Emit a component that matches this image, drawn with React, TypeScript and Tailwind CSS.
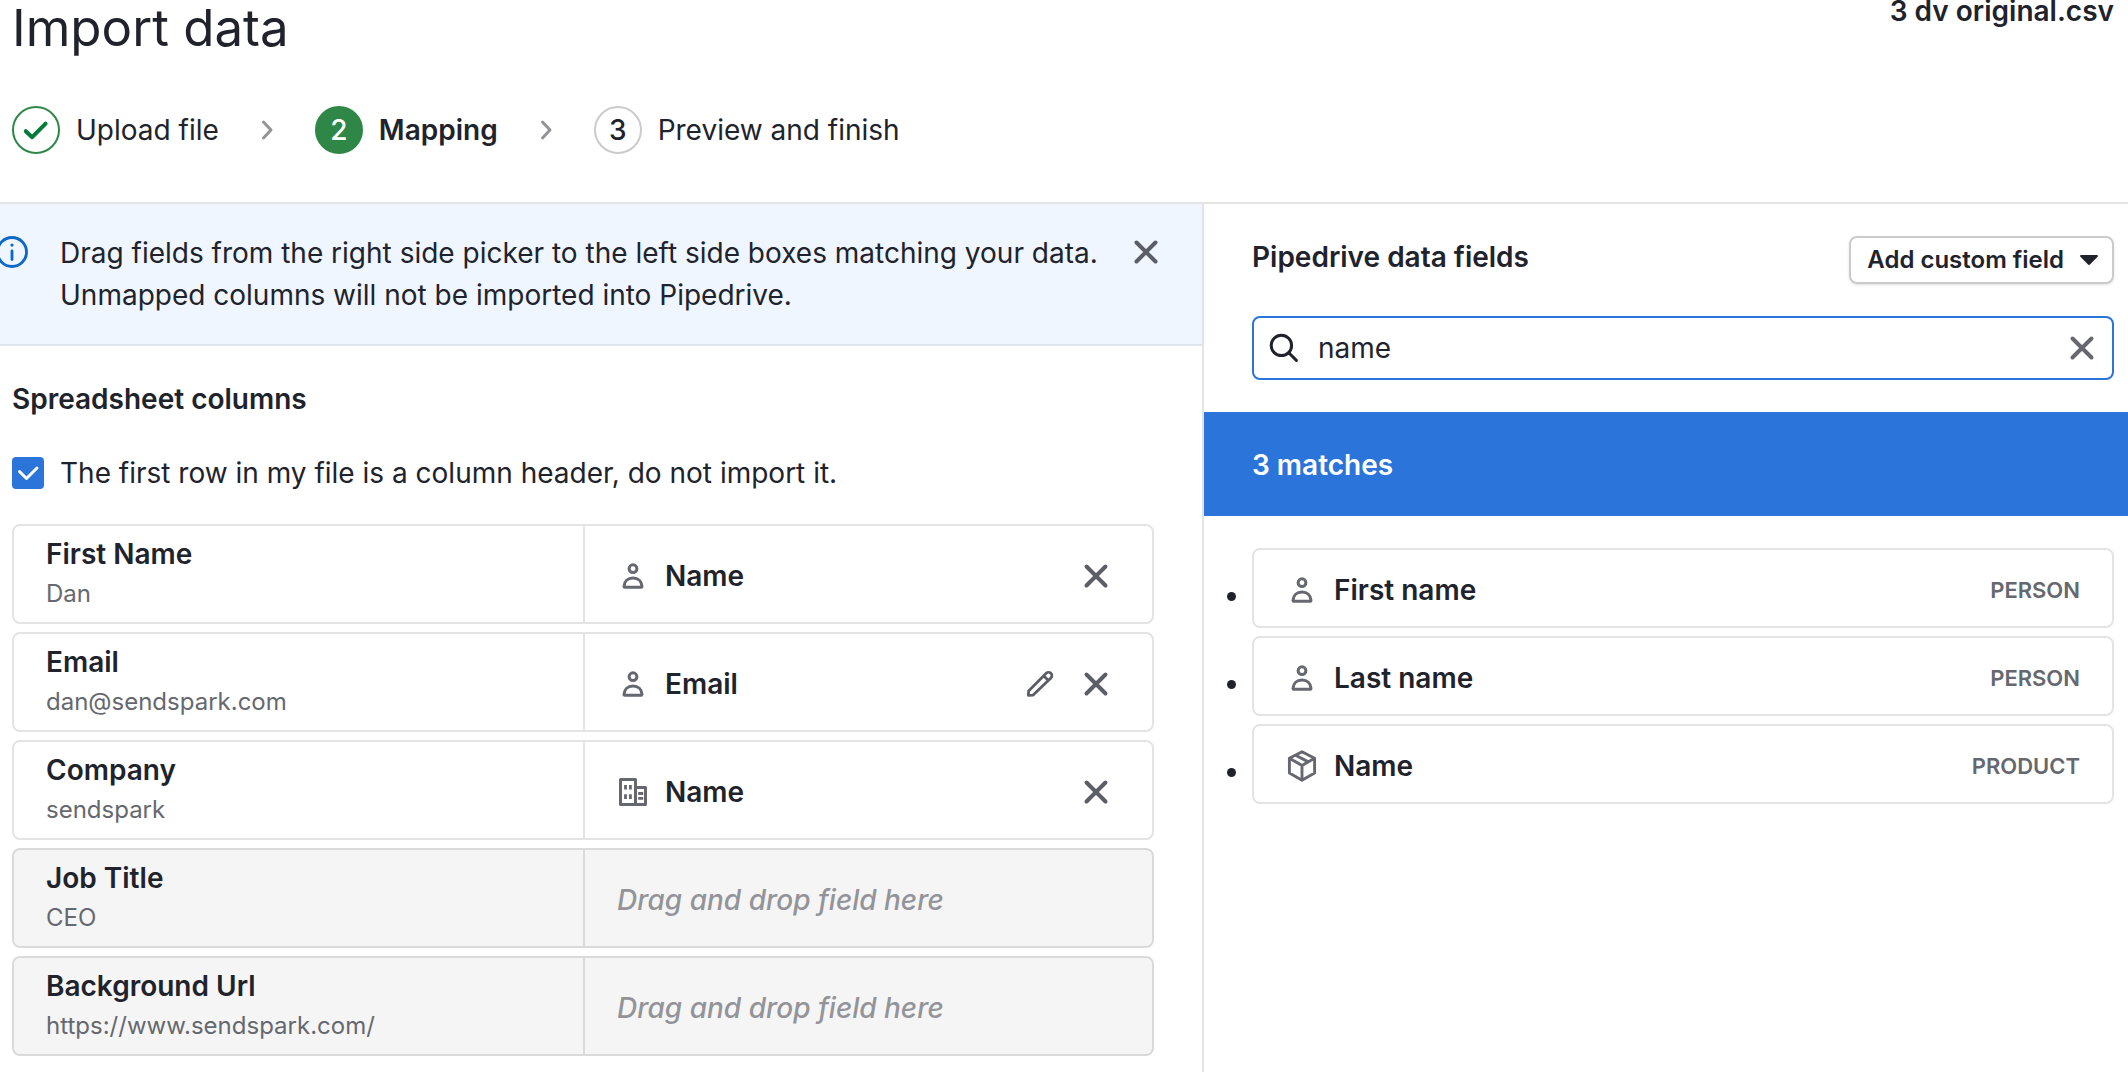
import { useState } from "react";
import type { ReactNode } from "react";
import clsx from "clsx";

type Kind = "person" | "organization" | "product";

const columns: {
  title: string;
  sample: string;
  field?: string;
  kind?: Kind;
  editable?: boolean;
}[] = [
  { title: "First Name", sample: "Dan", field: "Name", kind: "person" },
  {
    title: "Email",
    sample: "dan@sendspark.com",
    field: "Email",
    kind: "person",
    editable: true,
  },
  {
    title: "Company",
    sample: "sendspark",
    field: "Name",
    kind: "organization",
  },
  { title: "Job Title", sample: "CEO" },
  { title: "Background Url", sample: "https://www.sendspark.com/" },
];

const matches: { name: string; kind: Kind }[] = [
  { name: "First name", kind: "person" },
  { name: "Last name", kind: "person" },
  { name: "Name", kind: "product" },
];

const Icon = ({
  children,
  className,
  strokeWidth = 3,
}: {
  children: ReactNode;
  className?: string;
  strokeWidth?: number;
}) => (
  <svg
    viewBox="0 0 32 32"
    className={clsx("size-8 shrink-0", className)}
    fill="none"
    stroke="currentColor"
    strokeWidth={strokeWidth}
    strokeLinecap="round"
    strokeLinejoin="round"
    aria-hidden="true"
  >
    {children}
  </svg>
);

const CrossIcon = () => (
  <Icon strokeWidth={4}>
    <path d="M6.500 6.500l19 19M25.500 6.500l-19 19" />
  </Icon>
);

const PencilIcon = () => (
  <Icon strokeWidth={2.8}>
    <path d="M4.400 27.400l.2-4.500L22.200 5.300a3.300 3.300 0 0 1 4.700 4.700L9.200 27.100zM19.600 7.800l4.800 4.800" />
  </Icon>
);

const ChevronIcon = () => (
  <Icon className="text-[#939499]">
    <path d="M12.500 8l7.500 8-7.500 8" />
  </Icon>
);

const KindIcon = ({ kind }: { kind: Kind }) => {
  if (kind === "person") {
    return (
      <Icon className="text-[#65686f]" strokeWidth={3}>
        <circle cx="16" cy="8.700" r="3.900" />
        <path d="M16 18c-5.200 0-8.800 3.400-9 8.400 0 .5.300.9.800.9h16.400c.5 0 .8-.4.800-.9-.2-5-3.800-8.400-9-8.400z" />
      </Icon>
    );
  }
  if (kind === "organization") {
    return (
      <Icon className="text-[#65686f]" strokeWidth={3}>
        <path d="M3.500 3.500h15v25h-15zM18.500 11.500h10v17h-10" />
        <path
          d="M8.500 9v4.600M13.400 9v4.600M8.500 18.300v4.600M13.400 18.300v4.600M21.200 17.500h5M21.200 22.300h5"
          strokeLinecap="butt"
          strokeWidth={2.800}
        />
      </Icon>
    );
  }
  return (
    <Icon className="text-[#65686f]" strokeWidth={2.900}>
      <path d="M16 1.800l12.600 6.500v14.600L16 30.200 3.400 22.900V8.300zM3.400 8.300L16 15.400l12.600-7.100M16 15.400v14.800M9.600 5.200l12.700 6.700" />
    </Icon>
  );
};

const Step = ({
  label,
  badge,
  state,
}: {
  label: string;
  badge: ReactNode;
  state: "done" | "current" | "upcoming";
}) => (
  <li
    className="flex items-center gap-4"
    aria-current={state === "current" ? "step" : undefined}
  >
    <span
      className={clsx(
        "flex size-12 items-center justify-center rounded-full border-2 font-medium",
        state === "done" && "border-[#2f8747] text-[#047b38]",
        state === "current" && "border-[#2f8747] bg-[#2f8747] text-white",
        state === "upcoming" && "border-[#cbcbcb]"
      )}
    >
      {badge}
    </span>
    <span className={state === "current" ? "font-semibold" : ""}>{label}</span>
  </li>
);

const Header = () => (
  <header className="border-b-2 border-[#e4e4e4] pb-12 pl-3 pr-[14px]">
    <div className="flex items-start justify-between">
      <h1 className="text-[51px] leading-[56px]">Import data</h1>
      <p className="font-semibold leading-[22px]">3 dv original.csv</p>
    </div>
    <ol className="mt-[50px] flex items-center gap-8">
      <Step
        label="Upload file"
        state="done"
        badge={
          <Icon strokeWidth={4}>
            <path d="M5.800 17.200l6.400 6L25.600 9.600" />
          </Icon>
        }
      />
      <ChevronIcon />
      <Step label="Mapping" state="current" badge="2" />
      <ChevronIcon />
      <Step label="Preview and finish" state="upcoming" badge="3" />
    </ol>
  </header>
);

const Notice = () => (
  <div className="flex items-start border-b-2 border-[#dee4ed] bg-[#eff6ff] py-7 pr-10">
    <Icon className="-ml-1 mt-1 mr-8 text-[#0d68c5]" strokeWidth={2.800}>
      <circle cx="16" cy="16" r="14.500" />
      <path d="M16 15v8.500" />
      <path d="M16 9v.1" strokeWidth={3.200} />
    </Icon>
    <p className="flex-1 leading-[42px]">
      Drag fields from the right side picker to the left side boxes matching
      your data. Unmapped columns will not be imported into Pipedrive.
    </p>
    <button className="mt-1 text-[#5b5e66]" aria-label="Dismiss">
      <CrossIcon />
    </button>
  </div>
);

const ColumnList = () => (
  <ul className="mt-[30px] flex flex-col gap-2">
    {columns.map(({ title, sample, field, kind, editable }) => (
      <li
        key={title}
        className={clsx(
          "grid grid-cols-2 rounded-lg border-2",
          field ? "border-[#e4e4e4]" : "border-[#dadada] bg-[#f5f5f5]"
        )}
      >
        <div className="px-8 py-2">
          <p className="font-semibold">{title}</p>
          <p className="text-2xl leading-10 text-[#65686f]">{sample}</p>
        </div>
        <div
          className={clsx(
            "flex items-center border-l-2 pl-8 pr-10 pt-1",
            field ? "border-[#e4e4e4]" : "border-[#dadada]"
          )}
        >
          {field && kind ? (
            <>
              <KindIcon kind={kind} />
              <span className="ml-4 flex-1 font-semibold">{field}</span>
              <div className="flex gap-6 text-[#5b5e66]">
                {editable && (
                  <button aria-label={`Edit ${title}`}>
                    <PencilIcon />
                  </button>
                )}
                <button aria-label={`Remove ${title}`}>
                  <CrossIcon />
                </button>
              </div>
            </>
          ) : (
            <span className="font-medium italic text-[#939499]">
              Drag and drop field here
            </span>
          )}
        </div>
      </li>
    ))}
  </ul>
);

const FieldPicker = () => {
  const [query, setQuery] = useState("name");
  return (
    <aside>
      <div className="flex items-start justify-between pl-12 pr-[14px] pt-8">
        <h2 className="font-semibold leading-[42px]">Pipedrive data fields</h2>
        <button className="flex h-12 items-center gap-4 rounded-lg border-2 border-[#cbcbcb] pl-4 pr-[14px] text-2xl font-semibold shadow-sm">
          Add custom field
          <svg
            viewBox="0 0 18 10"
            className="h-[10px] w-[18px]"
            aria-hidden="true"
          >
            <path
              d="M1.200 0h15.600c1 0 1.500 1.100.8 1.800L10 9.500c-.6.600-1.400.6-2 0L.4 1.800C-.3 1.100.2 0 1.200 0z"
              fill="currentColor"
            />
          </svg>
        </button>
      </div>
      <div className="pb-8 pl-12 pr-[14px] pt-8">
        <div className="flex h-16 items-center rounded-lg border-2 border-[#2b74da] px-[14px]">
          <Icon strokeWidth={3}>
            <circle cx="13.400" cy="13.400" r="10.200" />
            <path d="M21 21l7.400 7.400" />
          </Icon>
          <input
            type="text"
            aria-label="Search fields"
            value={query}
            onChange={(e) => setQuery(e.target.value)}
            className="ml-[18px] min-w-0 flex-1 outline-none"
          />
          <button
            className="text-[#65686f]"
            aria-label="Clear search"
            onClick={() => setQuery("")}
          >
            <CrossIcon />
          </button>
        </div>
      </div>
      <p className="bg-[#2b74da] pb-[30px] pl-12 pt-8 font-semibold leading-[42px] text-white">
        3 matches
      </p>
      <ul className="flex list-disc flex-col gap-2 pb-8 pl-12 pr-[14px] pt-8">
        {matches.map(({ name, kind }) => (
          <li key={name + kind}>
            <div className="flex h-20 items-center rounded-lg border-2 border-[#e4e4e4] px-8 pt-1">
              <KindIcon kind={kind} />
              <span className="ml-4 flex-1 font-semibold">{name}</span>
              <span className="text-[22px] font-semibold uppercase text-[#65686f]">
                {kind}
              </span>
            </div>
          </li>
        ))}
      </ul>
    </aside>
  );
};

const App = () => {
  const [hasHeader, setHasHeader] = useState(true);
  return (
    <div className="flex min-h-screen flex-col bg-white font-[Inter,sans-serif] text-[28px] leading-10 text-[#21232c]">
      <Header />
      <div className="grid flex-1 grid-cols-[43fr_33fr]">
        <main className="border-r-2 border-[#e4e4e4]">
          <Notice />
          <section className="pb-3 pl-3 pr-12 pt-8">
            <h2 className="font-semibold leading-[42px]">
              Spreadsheet columns
            </h2>
            <label className="mt-8 flex items-center gap-4 leading-[42px]">
              <span className="relative flex size-8">
                <input
                  type="checkbox"
                  checked={hasHeader}
                  onChange={(e) => setHasHeader(e.target.checked)}
                  className="size-8 appearance-none rounded border-2 border-[#2b74da] checked:bg-[#2b74da]"
                />
                {hasHeader && (
                  <Icon
                    className="pointer-events-none absolute inset-0 text-white"
                    strokeWidth={3}
                  >
                    <path d="M7.500 14.500l7 7 10.500-10.500" />
                  </Icon>
                )}
              </span>
              The first row in my file is a column header, do not import it.
            </label>
            <ColumnList />
          </section>
        </main>
        <FieldPicker />
      </div>
    </div>
  );
};

export default App;
